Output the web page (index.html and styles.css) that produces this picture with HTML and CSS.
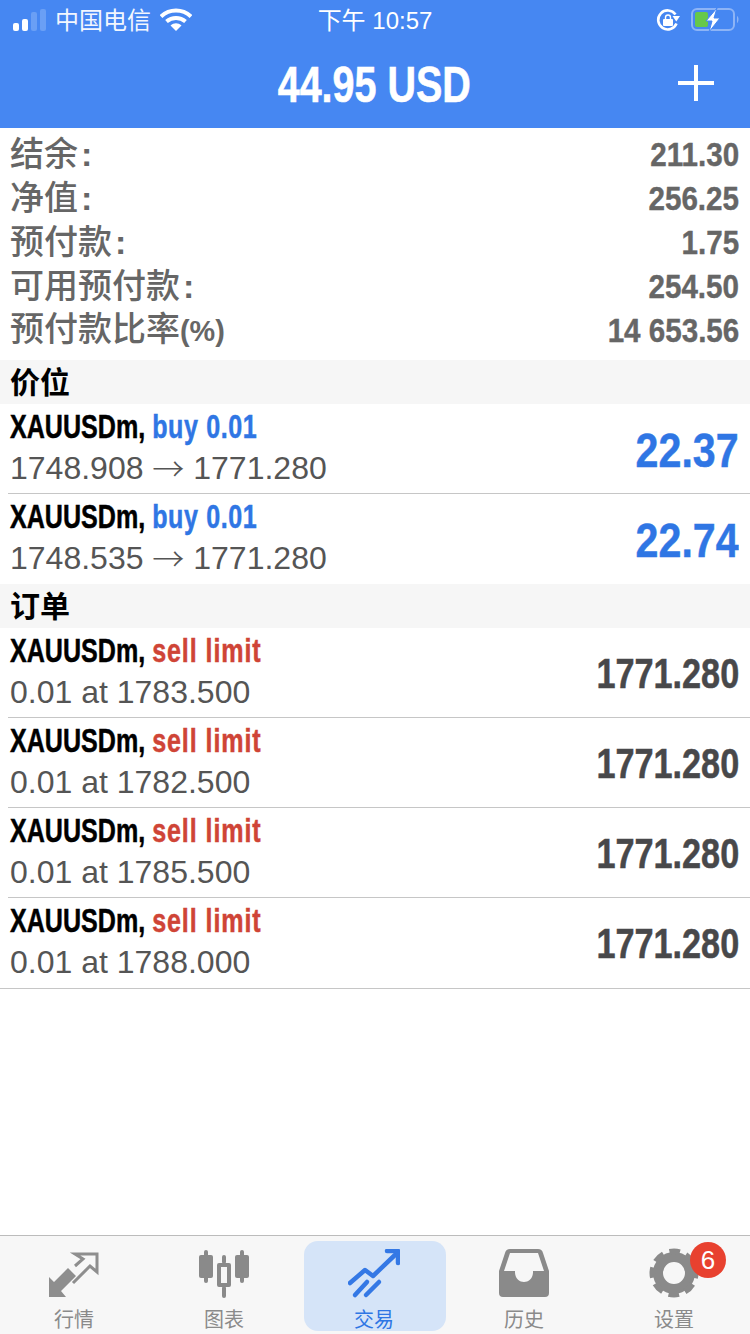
FILE: index.html
```html
<!DOCTYPE html>
<html lang="zh-CN">
<head>
    <meta charset="UTF-8">
    <meta name="viewport" content="width=device-width, initial-scale=1.0">
    <title>交易</title>
    <link rel="stylesheet" href="styles.css">
</head>
<body>
<div class="screen">

    <!-- 顶部 -->
    <header class="top">
        <div class="status">
            <div class="status-left">
                <svg class="signal" width="33" height="24" viewBox="0 0 33 24">
                    <rect x="0" y="15" width="6" height="8" rx="2" fill="#fff"/>
                    <rect x="9" y="11" width="6" height="12" rx="2" fill="#fff"/>
                    <rect x="18" y="4" width="6" height="19" rx="2" fill="#6a9ff5"/>
                    <rect x="27" y="1" width="6" height="22" rx="2" fill="#6a9ff5"/>
                </svg>
                <span class="carrier">中国电信</span>
                <svg class="wifi" width="32" height="24" viewBox="0 0 32 24">
                    <path d="M1 8.500C9.500 .5 22.500 .5 31 8.500" fill="none" stroke="#fff" stroke-width="4"/>
                    <path d="M6.500 13.500C12 8.700 20 8.700 25.500 13.500" fill="none" stroke="#fff" stroke-width="4"/>
                    <path d="M10.500 17.500C14 14.500 18 14.500 21.500 17.500L16 23Z" fill="#fff"/>
                </svg>
            </div>
            <div class="clock">下午 10:57</div>
            <div class="status-right">
                <svg width="24" height="24" viewBox="0 0 24 24">
                    <path d="M20.500 15.500A9.500 9.500 0 1 1 19.500 6.500" fill="none" stroke="#fff" stroke-width="2.600"/>
                    <path d="M16.500 8h7.500l-3.700 5.500z" fill="#fff"/>
                    <rect x="7" y="11" width="10" height="7" rx="1" fill="#fff"/>
                    <path d="M9.500 11V9.500a2.500 2.500 0 0 1 5 0V11" fill="none" stroke="#fff" stroke-width="1.400"/>
                </svg>
                <svg width="50" height="26" viewBox="0 0 50 26">
                    <rect x="2" y="2" width="42" height="21" rx="5" fill="none" stroke="#8db4f6" stroke-width="2"/>
                    <rect x="5" y="5" width="13" height="15" rx="2" fill="#66c84a"/>
                    <path d="M47 9c2 .5 2 6 0 7z" fill="#8db4f6"/>
                    <path d="M27 1L16 14h6l-3 11L30 11h-6z" fill="#fff" stroke="#4687f2" stroke-width="1"/>
                </svg>
            </div>
        </div>
        <div class="title-bar">
            <h1 class="title"><span class="title-text">44.95 USD</span></h1>
            <svg class="plus" width="36" height="36" viewBox="0 0 36 36">
                <path d="M18 0V36M0 18H36" stroke="#fff" stroke-width="4"/>
            </svg>
        </div>
    </header>

    <!-- 账户 -->
    <section class="summary">
        <div class="sum-row"><span class="sum-label">结余<span class="colon">:</span></span><span class="sum-value">211.30</span></div>
        <div class="sum-row"><span class="sum-label">净值<span class="colon">:</span></span><span class="sum-value">256.25</span></div>
        <div class="sum-row"><span class="sum-label">预付款<span class="colon">:</span></span><span class="sum-value">1.75</span></div>
        <div class="sum-row"><span class="sum-label">可用预付款<span class="colon">:</span></span><span class="sum-value">254.50</span></div>
        <div class="sum-row"><span class="sum-label">预付款比率<span class="unit">(%)</span></span><span class="sum-value">14 653.56</span></div>
    </section>

    <!-- 价位 -->
    <h2 class="section-head">价位</h2>
    <div class="trade">
        <div class="trade-info">
            <div class="trade-name">XAUUSDm, <span class="buy">buy 0.01</span></div>
            <div class="trade-detail">1748.908 <span class="arrow">→</span> 1771.280</div>
        </div>
        <div class="profit">22.37</div>
    </div>
    <div class="trade">
        <div class="trade-info">
            <div class="trade-name">XAUUSDm, <span class="buy">buy 0.01</span></div>
            <div class="trade-detail">1748.535 <span class="arrow">→</span> 1771.280</div>
        </div>
        <div class="profit">22.74</div>
    </div>

    <!-- 订单 -->
    <h2 class="section-head">订单</h2>
    <div class="trade">
        <div class="trade-info">
            <div class="trade-name">XAUUSDm, <span class="sell">sell limit</span></div>
            <div class="trade-detail">0.01 at 1783.500</div>
        </div>
        <div class="price">1771.280</div>
    </div>
    <div class="trade">
        <div class="trade-info">
            <div class="trade-name">XAUUSDm, <span class="sell">sell limit</span></div>
            <div class="trade-detail">0.01 at 1782.500</div>
        </div>
        <div class="price">1771.280</div>
    </div>
    <div class="trade">
        <div class="trade-info">
            <div class="trade-name">XAUUSDm, <span class="sell">sell limit</span></div>
            <div class="trade-detail">0.01 at 1785.500</div>
        </div>
        <div class="price">1771.280</div>
    </div>
    <div class="trade trade-end">
        <div class="trade-info">
            <div class="trade-name">XAUUSDm, <span class="sell">sell limit</span></div>
            <div class="trade-detail">0.01 at 1788.000</div>
        </div>
        <div class="price">1771.280</div>
    </div>

    <!-- 底部标签 -->
    <nav class="tabs">
        <div class="tab">
            <svg class="tab-icon" width="56" height="48" viewBox="0 0 56 48">
                <path d="M3 28L8 33 22 19 30 27 15 42 20 48H3Z" fill="#8e8e8e"/>
                <path d="M29 17L37 10 29 5H51V23L44 17 27 34" fill="none" stroke="#8e8e8e" stroke-width="3"/>
            </svg>
            <span class="tab-label">行情</span>
        </div>
        <div class="tab">
            <svg class="tab-icon" width="52" height="50" viewBox="0 0 52 50">
                <g fill="#8a8a8a">
                    <rect x="6" y="1" width="4" height="33" rx="2"/>
                    <rect x="1" y="6" width="14" height="23" rx="2"/>
                    <rect x="42" y="1" width="4" height="33" rx="2"/>
                    <rect x="37" y="6" width="14" height="23" rx="2"/>
                    <rect x="24" y="6" width="4" height="9" rx="2"/>
                    <rect x="24" y="37" width="4" height="12" rx="2"/>
                    <path fill-rule="evenodd" d="M21 14H31Q33 14 33 16V36Q33 38 31 38H21Q19 38 19 36V16Q19 14 21 14ZM23 18V34H29V18Z"/>
                </g>
            </svg>
            <span class="tab-label">图表</span>
        </div>
        <div class="tab tab-active">
            <svg class="tab-icon" width="52" height="50" viewBox="0 0 52 50">
                <g fill="none" stroke="#3478e5" stroke-width="4.500" stroke-linecap="round" stroke-linejoin="round">
                    <path d="M2 34L17 21l8 6L48 5"/>
                    <path d="M7 46L19 33"/>
                    <path d="M18 46L31 33"/>
                    <path d="M39 2H50V14"/>
                </g>
            </svg>
            <span class="tab-label">交易</span>
        </div>
        <div class="tab">
            <svg class="tab-icon" width="50" height="48" viewBox="0 0 50 48">
                <path d="M11 0H39Q43 0 44 4L50 22V44Q50 48 46 48H4Q0 48 0 44V22L6 4Q7 0 11 0ZM11 4L5 22H16V24C17 36 33 36 34 24V22H45L39 4Z" fill="#8a8a8a" fill-rule="evenodd"/>
            </svg>
            <span class="tab-label">历史</span>
        </div>
        <div class="tab">
            <svg class="tab-icon tab-gear" width="50" height="50" viewBox="0 0 50 50">
                <circle cx="25" cy="25" r="16" fill="none" stroke="#8a8a8a" stroke-width="10"/>
                <circle cx="25" cy="25" r="21.500" fill="none" stroke="#8a8a8a" stroke-width="6" stroke-dasharray="10.500 6.390" stroke-dashoffset="5.250"/>
            </svg>
            <span class="badge">6</span>
            <span class="tab-label">设置</span>
        </div>
    </nav>
</div>
</body>
</html>
```

FILE: styles.css
```css
* {
    box-sizing: border-box;
}
html, body {
    margin: 0;
    padding: 0;
}
body {
    background: #fff;
    font-family: "Liberation Sans", "Noto Sans CJK SC", sans-serif;
}
.screen {
    width: 750px;
    height: 1334px;
    display: flex;
    flex-direction: column;
    overflow: hidden;
}

/* top */
.top {
    height: 128px;
    background: #4687f2;
    color: #fff;
}
.status {
    height: 40px;
    padding: 0 10px 0 13px;
    display: flex;
    align-items: center;
    position: relative;
}
.status-left {
    display: flex;
    align-items: center;
    gap: 9px;
}
.carrier {
    font-size: 24px;
    line-height: 28px;
    margin-top: 2px;
    color: #f2f6fe;
}
.clock {
    position: absolute;
    left: 0;
    right: 0;
    top: 7px;
    text-align: center;
    font-size: 24px;
    line-height: 28px;
    pointer-events: none;
}
.status-right {
    margin-left: auto;
    display: flex;
    align-items: center;
    gap: 10px;
}
.title-bar {
    height: 88px;
    padding: 0 36px 0 0;
    display: flex;
    align-items: center;
    justify-content: flex-end;
    position: relative;
}
.title {
    position: absolute;
    left: 0;
    right: 2px;
    margin: 2px 0 0;
    text-align: center;
    font-size: 50px;
    font-weight: bold;
}
.title-text {
    display: inline-block;
    transform: scaleX(.79);
    -webkit-text-stroke: .6px #fff;
}
.plus {
    margin-top: -2px;
}

/* summary */
.summary {
    padding: 4px 11px 8px 10px;
}
.sum-row {
    height: 44px;
    display: flex;
    align-items: center;
    justify-content: space-between;
}
.sum-label {
    font-size: 34px;
    font-weight: 500;
    line-height: 44px;
    color: #666;
}
.colon {
    font-weight: bold;
    margin-left: 3px;
}
.unit {
    display: inline-block;
    font-size: 30px;
    font-weight: bold;
    transform: scaleX(.96);
    transform-origin: left center;
}
.sum-value {
    font-size: 34px;
    font-weight: bold;
    color: #666;
    transform: scaleX(.87);
    transform-origin: right center;
    -webkit-text-stroke: .4px #666;
}

/* lists */
.section-head {
    height: 44px;
    margin: 0;
    padding: 0 10px 4px;
    display: flex;
    align-items: center;
    background: #f6f6f6;
    font-size: 30px;
    font-weight: bold;
    color: #000;
}
.trade {
    height: 90px;
    padding: 0 11px 0 10px;
    display: flex;
    align-items: center;
    justify-content: space-between;
    background: linear-gradient(#c6c6c6, #c6c6c6) 8px bottom / 100% 1px no-repeat;
}
.trade:has(+ .section-head) {
    background: none;
}
.trade-end {
    height: 91px;
    padding-bottom: 1px;
    background: none;
    box-shadow: inset 0 -1px 0 #c6c6c6;
}
.trade-info {
    margin-top: -6px;
}
.trade-name {
    font-size: 33px;
    font-weight: bold;
    line-height: 44px;
    white-space: nowrap;
    color: #000;
    transform: scaleX(.76);
    transform-origin: left center;
    -webkit-text-stroke: .5px currentColor;
}
.trade-detail {
    font-size: 32px;
    line-height: 38px;
    color: #555;
}
.arrow {
    font-family: "Noto Sans CJK SC", sans-serif;
    font-weight: 300;
    line-height: 30px;
    vertical-align: -2px;
}
.buy, .profit {
    color: #2f76e4;
}
.buy {
    letter-spacing: .8px;
}
.sell {
    color: #cf4436;
    letter-spacing: 1.2px;
}
.profit {
    font-size: 49px;
    font-weight: bold;
    margin-top: 1px;
    transform: scaleX(.84);
    transform-origin: right center;
    -webkit-text-stroke: .5px currentColor;
}
.price {
    font-size: 42px;
    font-weight: bold;
    margin-top: 2px;
    color: #48484a;
    transform: scaleX(.815);
    transform-origin: right center;
    -webkit-text-stroke: .5px currentColor;
}

/* tabs */
.tabs {
    margin-top: auto;
    height: 99px;
    padding: 5px 4px 0;
    display: grid;
    grid-template-columns: repeat(5, 1fr);
    gap: 8px;
    background: #f7f7f7;
    border-top: 1px solid #bcbcbc;
}
.tab {
    height: 90px;
    position: relative;
    display: flex;
    flex-direction: column;
    align-items: center;
    justify-content: flex-end;
    border-radius: 14px;
}
.tab-icon {
    position: absolute;
    top: 8px;
    margin-right: 2px;
}
.tab-gear {
    top: 7px;
    margin-right: 3px;
}
.tab-label {
    font-size: 20px;
    line-height: 24px;
    color: #8a8a8a;
    margin: 0 2px -1px 0;
}
.tab-active {
    background: #d5e4f8;
}
.tab-active .tab-label {
    color: #2f76e4;
}
.badge {
    position: absolute;
    top: 1px;
    left: 86px;
    width: 36px;
    height: 36px;
    border-radius: 50%;
    background: #e8412f;
    color: #fff;
    font-size: 26px;
    line-height: 36px;
    text-align: center;
}
```
